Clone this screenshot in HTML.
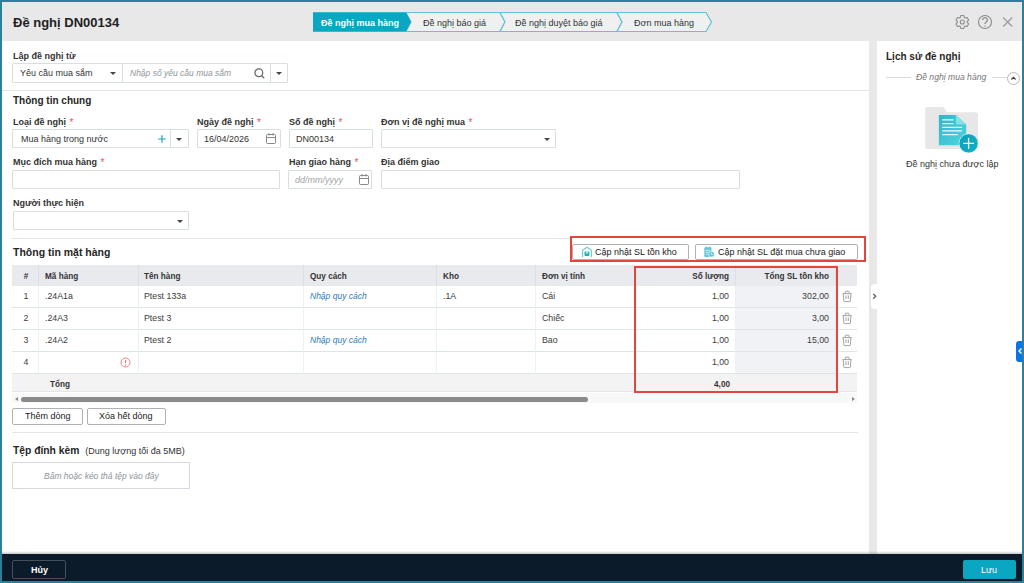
<!DOCTYPE html>
<html><head><meta charset="utf-8">
<style>
*{box-sizing:border-box;margin:0;padding:0}
html,body{width:1024px;height:583px;overflow:hidden;background:#2b8199}
body{font-family:"Liberation Sans",sans-serif;color:#262626;font-size:9px;position:relative}
.a{position:absolute;white-space:nowrap}
.hdr{left:2px;top:2px;width:1020px;height:39px;background:#e8e8e8}
.main{left:2px;top:41px;width:867px;height:513px;background:#fff}
.gap{left:869px;top:41px;width:8px;height:513px;background:#e8e8e8}
.side{left:877px;top:41px;width:145px;height:513px;background:#fff}
.shadow{left:2px;top:550.5px;width:1020px;height:3.5px;background:linear-gradient(rgba(0,0,0,0),rgba(0,0,0,0.22))}
.foot{left:2px;top:553.5px;width:1020px;height:27.5px;background:#0c1b2a}
.lbl{font-weight:bold;font-size:9px;color:#333;line-height:11px}
.req{color:#e8555c;font-weight:normal;font-size:10px;line-height:0;position:relative;top:1px;margin-left:1px}
.inp{border:1px solid #d7dfe3;background:#fff;border-radius:1px}
.sep{height:1px;background:#e3e6e8}
.h2{font-weight:bold;font-size:10px;color:#262626;line-height:12px}
.caret{position:absolute;width:0;height:0;border-left:3px solid transparent;border-right:3px solid transparent;border-top:3px solid #444}
.btn{border:1px solid #aeb2b6;background:#fff;border-radius:2px;text-align:center;color:#222}
.vd{position:absolute;top:0;bottom:0;width:1px;background:#d7dfe3}
.t{font-size:9px;line-height:11px;color:#333}
.red{border:2px solid #e5443f}
.th{font-size:8.2px;font-weight:bold;color:#333;line-height:10px}
.td{font-size:8.8px;color:#3c3c3c;line-height:11px}
.lnk{color:#2a7abb;font-style:italic;font-size:8.5px}
</style></head><body>
<div class="a hdr"></div>
<div class="a main"></div>
<div class="a gap"></div>
<div class="a side"></div>
<div class="a shadow"></div>
<div class="a foot"></div>

<!-- title -->
<div class="a" style="left:13px;top:15px;font-size:13px;font-weight:bold;color:#222;line-height:16px">Đề nghị DN00134</div>

<!-- steps -->
<svg class="a" style="left:300px;top:0" width="420" height="40" viewBox="300 0 420 40">
  <path d="M313 12.5 H406 L411 22 L406 31.5 H313 Z" fill="#0ba6c1"/>
  <path d="M406 12.5 H500 L505 22 L500 31.5 H406 L411 22 Z" fill="#f0f0f0" stroke="#62c2d6" stroke-width="1.2"/>
  <path d="M500 12.5 H617 L622 22 L617 31.5 H500 L505 22 Z" fill="#f0f0f0" stroke="#62c2d6" stroke-width="1.2"/>
  <path d="M617 12.5 H706 L711.5 22 L706 31.5 H617 L622 22 Z" fill="#f0f0f0" stroke="#62c2d6" stroke-width="1.2"/>
  <path d="M313 12.5 H406 L411 22 L406 31.5 H313 Z" fill="#0ba6c1"/>
</svg>
<div class="a" style="left:321px;top:17.5px;font-size:9px;font-weight:bold;color:#fff;line-height:11px">Đề nghị mua hàng</div>
<div class="a t" style="left:423px;top:17.5px;color:#333">Đề nghị báo giá</div>
<div class="a t" style="left:515px;top:17.5px;color:#333">Đề nghị duyệt báo giá</div>
<div class="a t" style="left:634px;top:17.5px;color:#333">Đơn mua hàng</div>

<!-- header icons -->
<svg class="a" style="left:950px;top:10px" width="70" height="24" viewBox="950 10 70 24" fill="none" stroke="#8c8c8c" stroke-width="1.1">
  <path d="M960.15 17.60 L960.82 15.57 L963.78 15.57 L964.45 17.60 L965.04 17.94 L967.13 17.50 L968.61 20.07 L967.19 21.66 L967.19 22.34 L968.61 23.93 L967.13 26.50 L965.04 26.06 L964.45 26.40 L963.78 28.43 L960.82 28.43 L960.15 26.40 L959.56 26.06 L957.47 26.50 L955.99 23.93 L957.41 22.34 L957.41 21.66 L955.99 20.07 L957.47 17.50 L959.56 17.94 Z" stroke-linejoin="round"/>
  <circle cx="962.3" cy="22" r="2"/>
  <circle cx="985" cy="22" r="6.5"/>
  <path d="M982.7 20 a2.3 2.3 0 1 1 3.5 2 c-0.9 0.5 -1.2 0.9 -1.2 1.9" stroke-width="1.3"/>
  <circle cx="985" cy="25.9" r="0.7" fill="#8c8c8c" stroke="none"/>
  <path d="M1003.2 17.5 L1012.2 26.5 M1012.2 17.5 L1003.2 26.5" stroke="#999"/>
</svg>

<!-- Lap de nghi tu -->
<div class="a lbl" style="left:13px;top:51px">Lập đề nghị từ</div>
<div class="a inp" style="left:12px;top:63px;width:276px;height:20px">
  <div class="vd" style="left:109px"></div>
  <div class="vd" style="left:257px"></div>
</div>
<div class="a t" style="left:20px;top:68px">Yêu cầu mua sắm</div>
<div class="caret" style="left:110px;top:72px"></div>
<div class="a t" style="left:130px;top:68px;font-style:italic;color:#8f959b;font-size:8.5px">Nhập số yêu cầu mua sắm</div>
<svg class="a" style="left:253px;top:67px" width="14" height="14" fill="none" stroke="#6a6a6a" stroke-width="1.3"><circle cx="5.8" cy="5.8" r="3.9"/><path d="M8.7 8.7 L10.8 10.8" stroke-linecap="round"/></svg>
<div class="caret" style="left:276px;top:72px"></div>

<div class="a sep" style="left:2px;top:90px;width:867px"></div>
<div class="a h2" style="left:13px;top:94.5px">Thông tin chung</div>

<!-- row 1 -->
<div class="a lbl" style="left:13px;top:116.5px">Loại đề nghị <span class="req">*</span></div>
<div class="a lbl" style="left:197px;top:116.5px">Ngày đề nghị <span class="req">*</span></div>
<div class="a lbl" style="left:289px;top:116.5px">Số đề nghị <span class="req">*</span></div>
<div class="a lbl" style="left:381px;top:116.5px">Đơn vị đề nghị mua <span class="req">*</span></div>

<div class="a inp" style="left:12px;top:129px;width:177px;height:19px"><div class="vd" style="left:157px"></div></div>
<div class="a t" style="left:21px;top:134px">Mua hàng trong nước</div>
<svg class="a" style="left:156.5px;top:133.5px" width="10" height="10" stroke="#1aa3c4" stroke-width="1.2"><path d="M5 1.2 V8.8 M1.2 5 H8.8"/></svg>
<div class="caret" style="left:176px;top:138px"></div>

<div class="a inp" style="left:197px;top:129px;width:84px;height:19px"></div>
<div class="a t" style="left:204px;top:134px">16/04/2026</div>
<svg class="a" style="left:265px;top:132px" width="12" height="13" fill="none" stroke="#888" stroke-width="1"><rect x="1.5" y="2.5" width="9" height="9" rx="1"/><path d="M1.5 5.5 H10.5 M4 1 V3.5 M8 1 V3.5"/></svg>

<div class="a inp" style="left:289px;top:129px;width:84px;height:19px"></div>
<div class="a t" style="left:296px;top:134px">DN00134</div>

<div class="a inp" style="left:381px;top:129px;width:175px;height:19px"></div>
<div class="caret" style="left:544px;top:138px"></div>

<!-- row 2 -->
<div class="a lbl" style="left:13px;top:157px">Mục đích mua hàng <span class="req">*</span></div>
<div class="a lbl" style="left:289px;top:157px">Hạn giao hàng <span class="req">*</span></div>
<div class="a lbl" style="left:381px;top:157px">Địa điểm giao</div>

<div class="a inp" style="left:12px;top:170px;width:268px;height:19px"></div>
<div class="a inp" style="left:288px;top:170px;width:84px;height:19px"></div>
<div class="a t" style="left:295px;top:175px;font-style:italic;color:#a0a4a8">dd/mm/yyyy</div>
<svg class="a" style="left:357.5px;top:173px" width="12" height="13" fill="none" stroke="#888" stroke-width="1"><rect x="1.5" y="2.5" width="9" height="9" rx="1"/><path d="M1.5 5.5 H10.5 M4 1 V3.5 M8 1 V3.5"/></svg>
<div class="a inp" style="left:381px;top:170px;width:359px;height:19px"></div>

<!-- row 3 -->
<div class="a lbl" style="left:13px;top:198px">Người thực hiện</div>
<div class="a inp" style="left:13px;top:211px;width:176px;height:19px"></div>
<div class="caret" style="left:177px;top:220px"></div>

<div class="a sep" style="left:12px;top:238px;width:558px"></div>
<div class="a h2" style="left:13px;top:246px;font-size:10.5px">Thông tin mặt hàng</div>

<!-- buttons over table -->
<div class="a btn" style="left:572px;top:244px;width:117px;height:16px"></div>
<svg class="a" style="left:580px;top:245px" width="14" height="14"><path d="M2.5 12 V5.2 L7 2.3 L11.5 5.2 V12" fill="none" stroke="#72c9d9" stroke-width="1.2" stroke-linejoin="round"/><path d="M4.5 6.5 H9.4 V10 Q9.4 11 8.4 11 H5.5 Q4.5 11 4.5 10 Z" fill="#1eafb9"/><path d="M6.2 6.5 V8.6 H7.7 V6.5" fill="#fff"/></svg>
<div class="a t" style="left:595px;top:247px;color:#222">Cập nhật SL tồn kho</div>
<div class="a btn" style="left:695px;top:244px;width:163px;height:16px"></div>
<svg class="a" style="left:703px;top:246px" width="13" height="12"><rect x="1.3" y="1.3" width="7.2" height="9.6" rx="1.2" fill="#62c6d7"/><rect x="2.3" y="0.6" width="1.6" height="1.8" rx="0.8" fill="#62c6d7"/><rect x="5.9" y="0.6" width="1.6" height="1.8" rx="0.8" fill="#62c6d7"/><path d="M2.7 4.3 H6.8 M2.7 6.2 H5.3 M2.7 8.1 H4.6" stroke="#fff" stroke-width="0.7"/><circle cx="8.5" cy="8.2" r="3" fill="#62c6d7" stroke="#fff" stroke-width="0.7"/><path d="M8.5 6.7 V8.4 H9.7" fill="none" stroke="#fff" stroke-width="0.7"/></svg>
<div class="a t" style="left:718px;top:247px;color:#222">Cập nhật SL đặt mua chưa giao</div>
<div class="a red" style="left:570px;top:236px;width:296px;height:26px"></div>
<!-- table -->
<div class="a" style="left:12px;top:265px;width:845px;height:21px;background:#e9eaee"></div>
<div class="a" style="left:735px;top:286px;width:100px;height:88px;background:#f1f2f6"></div>
<div class="a" style="left:12px;top:374px;width:845px;height:18px;background:#f3f3f4;border-bottom:1px solid #e4e7e9"></div>
<div class="a" style="left:12px;top:307px;width:845px;height:1px;background:#dde5e8"></div>
<div class="a" style="left:12px;top:329px;width:845px;height:1px;background:#dde5e8"></div>
<div class="a" style="left:12px;top:351px;width:845px;height:1px;background:#dde5e8"></div>
<div class="a" style="left:12px;top:373px;width:845px;height:1px;background:#dde5e8"></div>
<div class="a" style="left:38px;top:265px;width:1px;height:21px;background:#dcdfe4"></div>
<div class="a" style="left:138px;top:265px;width:1px;height:21px;background:#dcdfe4"></div>
<div class="a" style="left:303px;top:265px;width:1px;height:21px;background:#dcdfe4"></div>
<div class="a" style="left:436px;top:265px;width:1px;height:21px;background:#dcdfe4"></div>
<div class="a" style="left:535px;top:265px;width:1px;height:21px;background:#dcdfe4"></div>
<div class="a" style="left:634px;top:265px;width:1px;height:21px;background:#dcdfe4"></div>
<div class="a" style="left:734.5px;top:265px;width:1px;height:21px;background:#dcdfe4"></div>
<div class="a" style="left:835px;top:265px;width:1px;height:21px;background:#dcdfe4"></div>
<div class="a" style="left:38px;top:286px;width:0;height:88px;border-left:1px solid #eef1f3"></div>
<div class="a" style="left:138px;top:286px;width:0;height:88px;border-left:1px solid #eef1f3"></div>
<div class="a" style="left:303px;top:286px;width:0;height:88px;border-left:1px solid #eef1f3"></div>
<div class="a" style="left:436px;top:286px;width:0;height:88px;border-left:1px solid #eef1f3"></div>
<div class="a" style="left:535px;top:286px;width:0;height:88px;border-left:1px solid #eef1f3"></div>
<div class="a" style="left:634px;top:286px;width:0;height:88px;border-left:1px solid #eef1f3"></div>
<div class="a" style="left:735px;top:286px;width:0;height:88px;border-left:1px solid #eef1f3"></div>
<div class="a" style="left:835px;top:286px;width:0;height:88px;border-left:1px solid #eef1f3"></div>
<div class="a th" style="left:16px;width:20px;text-align:center;top:271.5px">#</div>
<div class="a th" style="left:45px;top:271.5px">Mã hàng</div>
<div class="a th" style="left:144px;top:271.5px">Tên hàng</div>
<div class="a th" style="left:310px;top:271.5px">Quy cách</div>
<div class="a th" style="left:443px;top:271.5px">Kho</div>
<div class="a th" style="left:542px;top:271.5px">Đơn vị tính</div>
<div class="a th" style="right:295px;top:271.5px">Số lượng</div>
<div class="a th" style="right:195px;top:271.5px">Tổng SL tồn kho</div>
<div class="a td" style="left:16px;width:20px;text-align:center;top:291px">1</div>
<div class="a td" style="left:45px;top:291px">.24A1a</div>
<div class="a td" style="left:144px;top:291px">Ptest 133a</div>
<div class="a td lnk" style="left:310px;top:291px">Nhập quy cách</div>
<div class="a td" style="left:443px;top:291px">.1A</div>
<div class="a td" style="left:542px;top:291px">Cái</div>
<div class="a td" style="right:295px;top:291px">1,00</div>
<div class="a td" style="right:195px;top:291px">302,00</div>
<svg class="a" style="left:841px;top:290px" width="12" height="14" fill="none" stroke="#a3a3a3" stroke-width="1"><path d="M4.3 3.3 V1.6 Q4.3 1.2 4.7 1.2 H7.6 Q8 1.2 8 1.6 V3.3 M1.6 3.6 H10.6 M2.2 3.6 L2.9 11.3 Q3 11.6 3.4 11.6 H8.8 Q9.2 11.6 9.3 11.3 L10 3.6 M5 5.3 V9 M7.3 5.3 V9" stroke-linejoin="round"/></svg>
<div class="a td" style="left:16px;width:20px;text-align:center;top:313px">2</div>
<div class="a td" style="left:45px;top:313px">.24A3</div>
<div class="a td" style="left:144px;top:313px">Ptest 3</div>
<div class="a td" style="left:542px;top:313px">Chiếc</div>
<div class="a td" style="right:295px;top:313px">1,00</div>
<div class="a td" style="right:195px;top:313px">3,00</div>
<svg class="a" style="left:841px;top:312px" width="12" height="14" fill="none" stroke="#a3a3a3" stroke-width="1"><path d="M4.3 3.3 V1.6 Q4.3 1.2 4.7 1.2 H7.6 Q8 1.2 8 1.6 V3.3 M1.6 3.6 H10.6 M2.2 3.6 L2.9 11.3 Q3 11.6 3.4 11.6 H8.8 Q9.2 11.6 9.3 11.3 L10 3.6 M5 5.3 V9 M7.3 5.3 V9" stroke-linejoin="round"/></svg>
<div class="a td" style="left:16px;width:20px;text-align:center;top:335px">3</div>
<div class="a td" style="left:45px;top:335px">.24A2</div>
<div class="a td" style="left:144px;top:335px">Ptest 2</div>
<div class="a td lnk" style="left:310px;top:335px">Nhập quy cách</div>
<div class="a td" style="left:542px;top:335px">Bao</div>
<div class="a td" style="right:295px;top:335px">1,00</div>
<div class="a td" style="right:195px;top:335px">15,00</div>
<svg class="a" style="left:841px;top:334px" width="12" height="14" fill="none" stroke="#a3a3a3" stroke-width="1"><path d="M4.3 3.3 V1.6 Q4.3 1.2 4.7 1.2 H7.6 Q8 1.2 8 1.6 V3.3 M1.6 3.6 H10.6 M2.2 3.6 L2.9 11.3 Q3 11.6 3.4 11.6 H8.8 Q9.2 11.6 9.3 11.3 L10 3.6 M5 5.3 V9 M7.3 5.3 V9" stroke-linejoin="round"/></svg>
<div class="a td" style="left:16px;width:20px;text-align:center;top:357px">4</div>
<div class="a td" style="right:295px;top:357px">1,00</div>
<svg class="a" style="left:841px;top:356px" width="12" height="14" fill="none" stroke="#a3a3a3" stroke-width="1"><path d="M4.3 3.3 V1.6 Q4.3 1.2 4.7 1.2 H7.6 Q8 1.2 8 1.6 V3.3 M1.6 3.6 H10.6 M2.2 3.6 L2.9 11.3 Q3 11.6 3.4 11.6 H8.8 Q9.2 11.6 9.3 11.3 L10 3.6 M5 5.3 V9 M7.3 5.3 V9" stroke-linejoin="round"/></svg>
<svg class="a" style="left:120px;top:357px" width="11" height="11" fill="none" stroke="#e9747b" stroke-width="0.9"><circle cx="5.5" cy="5.5" r="4.5"/><path d="M5.5 3 V6.2" stroke-width="1.1"/><circle cx="5.5" cy="7.9" r="0.55" fill="#e9747b" stroke="none"/></svg>
<div class="a th" style="left:50px;top:379.5px">Tổng</div>
<div class="a th" style="right:294px;top:379.5px">4,00</div>
<div class="a red" style="left:634px;top:266px;width:204px;height:126.5px"></div>
<!-- scrollbar -->
<div class="a" style="left:12px;top:393px;width:845px;height:10px;background:#f8f8f8"></div>
<div class="a" style="left:21px;top:397px;width:567px;height:5px;background:#8a8a8a;border-radius:3px"></div>
<div class="a" style="left:14.5px;top:396.5px;width:0;height:0;border-top:2.5px solid transparent;border-bottom:2.5px solid transparent;border-right:3.5px solid #888"></div>
<div class="a" style="left:852px;top:397px;width:0;height:0;border-top:2.5px solid transparent;border-bottom:2.5px solid transparent;border-left:3px solid #888"></div>
<div class="a btn" style="left:12px;top:408px;width:71px;height:17px"></div>
<div class="a t" style="left:25px;top:411px;color:#222">Thêm dòng</div>
<div class="a btn" style="left:87px;top:408px;width:79px;height:17px"></div>
<div class="a t" style="left:99px;top:411px;color:#222">Xóa hết dòng</div>
<div class="a sep" style="left:12px;top:432px;width:846px"></div>
<div class="a h2" style="left:13px;top:445px;font-size:10.3px">Tệp đính kèm <span style="font-weight:normal;font-size:9px;color:#333;margin-left:3px">(Dung lượng tối đa 5MB)</span></div>
<div class="a" style="left:12px;top:462px;width:178px;height:27px;border:1px solid #d5d9e0;background:#fff"></div>
<div class="a t" style="left:44px;top:471px;font-style:italic;color:#8e949a;font-size:8.5px">Bấm hoặc kéo thả tệp vào đây</div>
<!-- footer -->
<div class="a" style="left:12px;top:560px;width:54px;height:19px;border:1px solid #46505b;border-radius:2px"></div>
<div class="a" style="left:31px;top:565px;font-size:9px;font-weight:bold;color:#fff;line-height:11px">Hủy</div>
<div class="a" style="left:963px;top:560px;width:53px;height:19px;background:#0ba6c1;border-radius:2px"></div>
<div class="a" style="left:981px;top:565px;font-size:9px;color:#fff;line-height:11px">Lưu</div>
<!-- sidebar -->
<div class="a h2" style="left:886px;top:51px">Lịch sử đề nghị</div>
<div class="a" style="left:886px;top:76.5px;width:25px;height:1px;background:#dadada"></div>
<div class="a t" style="left:916px;top:72px;font-style:italic;color:#777;font-size:8.6px">Đề nghị mua hàng</div>
<div class="a" style="left:992px;top:76.5px;width:15px;height:1px;background:#dadada"></div>
<svg class="a" style="left:1006px;top:70.5px" width="15" height="15" fill="none" stroke="#b0b0b0" stroke-width="0.9"><circle cx="7.5" cy="7.5" r="6"/><path d="M5.4 8.5 L7.5 6.4 L9.6 8.5" stroke="#3a3a3a" stroke-width="1.1"/></svg>
<svg class="a" style="left:924px;top:104px" width="56" height="50"><defs><linearGradient id="dg" x1="0" y1="0" x2="1" y2="1"><stop offset="0" stop-color="#36b3c9"/><stop offset="1" stop-color="#4dd6e2"/></linearGradient><linearGradient id="cg" x1="0" y1="0" x2="1" y2="1"><stop offset="0" stop-color="#0b9fb8"/><stop offset="1" stop-color="#14b3c6"/></linearGradient></defs><path d="M1.2 5 Q1.2 3 3.2 3 H18 Q19.5 3 20.5 4.2 L23 8.2 H51.5 Q54 8.2 54 10.5 V43 Q54 45 52 45 H3.2 Q1.2 45 1.2 43 Z" fill="#e7e7e7"/><path d="M14.9 11 H31.8 L42.2 20.5 V41.3 H14.9 Z" fill="url(#dg)"/><path d="M31.8 11 L42.2 20.5 H31.8 Z" fill="#8fdbe6"/><path d="M18.2 15.8 H29.5 M18.2 19.6 H29.5 M18.2 23.4 H38 M18.2 26.9 H38 M18.2 30.7 H33.7" stroke="#fff" stroke-width="1.3" opacity="0.92"/><circle cx="44.6" cy="39.4" r="9.6" fill="url(#cg)" stroke="#fff" stroke-width="0.6"/><path d="M44.6 34 V44.8 M39.2 39.4 H50" stroke="#fff" stroke-width="1.3"/></svg>
<div class="a t" style="left:906px;top:158.5px;color:#333">Đề nghị chưa được lập</div>
<div class="a" style="left:870.5px;top:284px;width:6.5px;height:24.5px;background:#fff;border-radius:4px 0 0 4px"></div>
<svg class="a" style="left:871px;top:292px" width="6" height="8" fill="none" stroke="#5a5a5a" stroke-width="1.3"><path d="M2.3 1.9 L4.7 4.3 L2.3 6.7"/></svg>
<div class="a" style="left:1016px;top:341px;width:8px;height:21px;background:#0a73e8;border-radius:3px 0 0 3px"></div>
<svg class="a" style="left:1017px;top:347px" width="6" height="8" fill="none" stroke="#fff" stroke-width="1.4"><path d="M4.5 1.5 L2 4 L4.5 6.5"/></svg>
<div class="a" style="left:1022px;top:0;width:2px;height:583px;background:#2b8199"></div>
</body></html>
